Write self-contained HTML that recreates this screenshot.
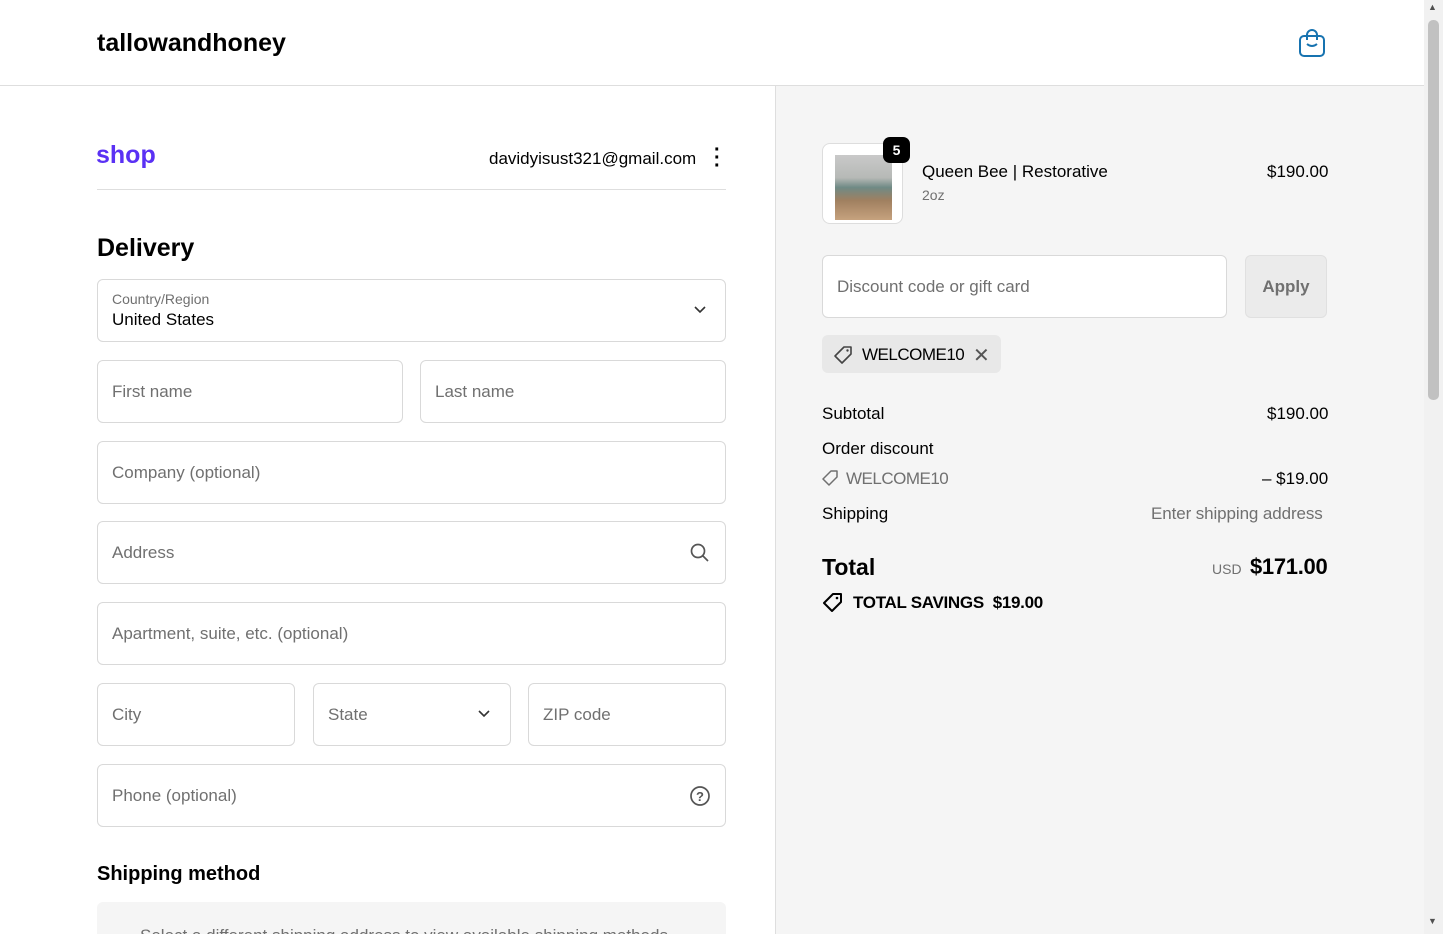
<!DOCTYPE html>
<html><head><meta charset="utf-8"><style>
*{box-sizing:border-box;margin:0;padding:0}
html,body{width:1443px;height:934px;overflow:hidden}
body{font-family:"Liberation Sans",sans-serif;color:#000;background:#fff;position:relative}
.abs{position:absolute}
.hdr{left:0;top:0;width:1424px;height:86px;border-bottom:1px solid #dedede;background:#fff}
.right{left:775px;top:86px;width:649px;height:848px;background:#f5f5f5;border-left:1px solid #dedede}
.f{position:absolute;border:1px solid #d9d9d9;border-radius:6px;background:#fff;height:63px;font-size:17px;color:#707070;padding-left:14px;display:flex;align-items:center}
.sb{left:1424px;top:0;width:19px;height:934px;background:#f1f1f1}
.t{position:absolute;font-size:17px;white-space:nowrap}
</style></head><body>
<div class="abs hdr"></div>
<div class="t" style="left:97px;top:29px;font-size:25px;font-weight:bold">tallowandhoney</div>
<svg class="abs" style="left:1298px;top:28px" width="28" height="30" viewBox="0 0 28 30"><rect x="2" y="8" width="24" height="20" rx="4" fill="none" stroke="#1773b0" stroke-width="2"/><path d="M9 12V7a5 5 0 0 1 10 0v5" fill="none" stroke="#1773b0" stroke-width="2"/><path d="M9 16q5 4 10 0" fill="none" stroke="#1773b0" stroke-width="2"/></svg>
<div class="t" style="left:96px;top:141px;font-size:25px;font-weight:bold;color:#5a31f4">shop</div>
<div class="t" style="left:489px;top:149px">davidyisust321@gmail.com</div>
<div class="t" style="left:714px;top:146px;font-size:20px;font-weight:bold;line-height:8px">·<br>·<br>·</div>
<div class="abs" style="left:97px;top:189px;width:629px;height:1px;background:#dedede"></div>
<div class="t" style="left:97px;top:234px;font-size:25px;font-weight:bold">Delivery</div>
<div class="f" style="left:97px;top:279px;width:629px;display:block;padding-top:11px">
<div style="font-size:14px;color:#707070">Country/Region</div><div style="font-size:17px;color:#000;margin-top:3px">United States</div></div>
<svg class="abs" style="left:694px;top:305px" width="12" height="10"><path d="M1 2l5 5 5-5" fill="none" stroke="#333" stroke-width="1.6"/></svg>
<div class="f" style="left:97px;top:360px;width:306px">First name</div>
<div class="f" style="left:420px;top:360px;width:306px">Last name</div>
<div class="f" style="left:97px;top:441px;width:629px">Company (optional)</div>
<div class="f" style="left:97px;top:521px;width:629px">Address</div>
<svg class="abs" style="left:690px;top:543px" width="20" height="20"><circle cx="8" cy="8" r="6.5" fill="none" stroke="#555" stroke-width="1.7"/><path d="M13 13l5 5" stroke="#555" stroke-width="1.7"/></svg>
<div class="f" style="left:97px;top:602px;width:629px">Apartment, suite, etc. (optional)</div>
<div class="f" style="left:97px;top:683px;width:198px">City</div>
<div class="f" style="left:313px;top:683px;width:198px">State</div>
<svg class="abs" style="left:478px;top:709px" width="12" height="10"><path d="M1 2l5 5 5-5" fill="none" stroke="#333" stroke-width="1.6"/></svg>
<div class="f" style="left:528px;top:683px;width:198px">ZIP code</div>
<div class="f" style="left:97px;top:764px;width:629px">Phone (optional)</div>
<svg class="abs" style="left:689px;top:785px" width="22" height="22"><circle cx="11" cy="11" r="9" fill="none" stroke="#555" stroke-width="1.7"/><text x="11" y="16" font-size="13" font-weight="bold" text-anchor="middle" fill="#555" font-family="Liberation Sans">?</text></svg>
<div class="t" style="left:97px;top:863px;font-size:20px;font-weight:bold">Shipping method</div>
<div class="abs" style="left:97px;top:902px;width:629px;height:40px;background:#f5f5f5;border-radius:6px"></div>
<div class="t" style="left:140px;top:926px;color:#707070">Select a different shipping address to view available shipping methods</div>

<div class="abs right"></div>
<div class="abs" style="left:822px;top:143px;width:81px;height:81px;border:1px solid #ddd;border-radius:8px;background:#fff"></div>
<div class="abs" style="left:835px;top:155px;width:57px;height:65px;background:linear-gradient(#c9c9c9 0%,#b6b9b6 35%,#6f8a85 50%,#a08060 70%,#c6a27e 100%)"></div>
<div class="abs" style="left:883px;top:137px;width:27px;height:26px;background:#000;border-radius:7px;color:#fff;font-weight:bold;font-size:14px;text-align:center;line-height:26px">5</div>
<div class="t" style="left:922px;top:162px">Queen Bee | Restorative</div>
<div class="t" style="left:922px;top:187px;font-size:14px;color:#707070">2oz</div>
<div class="t" style="left:1267px;top:162px">$190.00</div>
<div class="f" style="left:822px;top:255px;width:405px">Discount code or gift card</div>
<div class="abs" style="left:1245px;top:255px;width:82px;height:63px;background:#ebebeb;border:1px solid #e0e0e0;border-radius:6px;color:#707070;font-weight:bold;font-size:17px;text-align:center;line-height:61px">Apply</div>
<div class="abs" style="left:822px;top:335px;width:179px;height:38px;background:#e8e8e8;border-radius:6px"></div>
<svg class="abs" style="left:833px;top:345px" width="20" height="20"><path d="M11 2h7v7l-9 9-7-7z" fill="none" stroke="#444" stroke-width="1.6" stroke-linejoin="round"/><circle cx="14.5" cy="5.5" r="1.2" fill="#444"/></svg>
<div class="t" style="left:862px;top:345px;letter-spacing:-0.5px">WELCOME10</div>
<div class="t" style="left:973px;top:343px;font-size:20px;color:#555">✕</div>
<div class="t" style="left:822px;top:404px">Subtotal</div>
<div class="t" style="left:1267px;top:404px">$190.00</div>
<div class="t" style="left:822px;top:439px">Order discount</div>
<svg class="abs" style="left:822px;top:470px" width="17" height="17"><path d="M9 1h6v6l-8 8-6-6z" fill="none" stroke="#707070" stroke-width="1.5" stroke-linejoin="round"/></svg>
<div class="t" style="left:846px;top:469px;color:#707070;letter-spacing:-0.5px">WELCOME10</div>
<div class="t" style="left:1262px;top:469px">– $19.00</div>
<div class="t" style="left:822px;top:504px">Shipping</div>
<div class="t" style="left:1151px;top:504px;color:#707070;letter-spacing:-0.1px">Enter shipping address</div>
<div class="t" style="left:822px;top:554px;font-size:23px;font-weight:bold">Total</div>
<div class="t" style="left:1212px;top:561px;font-size:14px;color:#707070">USD</div>
<div class="t" style="left:1250px;top:554px;font-size:22px;font-weight:bold;letter-spacing:-0.3px">$171.00</div>
<svg class="abs" style="left:822px;top:592px" width="22" height="20"><path d="M11 2h8v8l-9 9-8-8z" fill="none" stroke="#000" stroke-width="2" stroke-linejoin="round"/><circle cx="15" cy="6" r="1.3" fill="#000"/></svg>
<div class="t" style="left:853px;top:593px;font-weight:bold;letter-spacing:-0.3px">TOTAL SAVINGS&nbsp;&nbsp;$19.00</div>

<div class="abs sb"></div>
<div class="abs" style="left:1428px;top:20px;width:11px;height:380px;background:#c1c1c1;border-radius:5px"></div>
<div class="t" style="left:1428px;top:2px;font-size:9px;color:#505050">▲</div>
<div class="t" style="left:1428px;top:916px;font-size:9px;color:#505050">▼</div>
</body></html>
